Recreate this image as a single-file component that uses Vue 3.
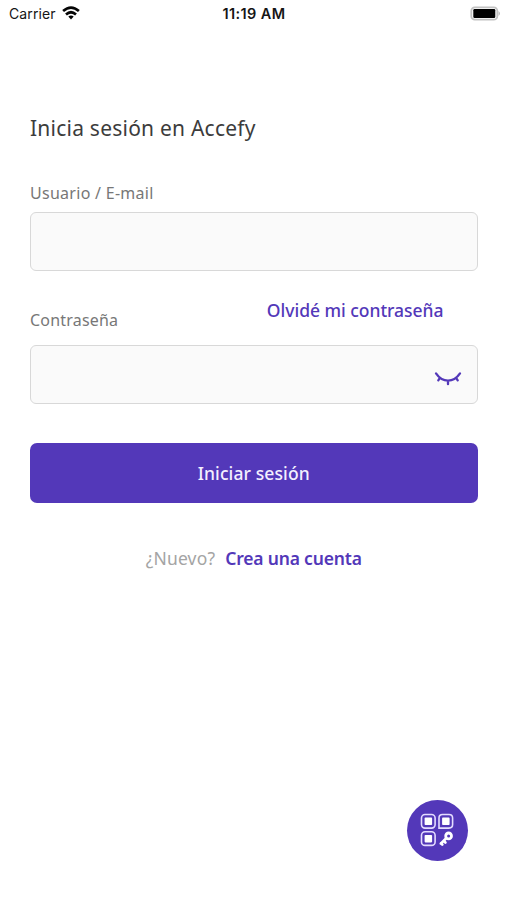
<script setup>
import { ref } from 'vue'

const user = ref('')
const password = ref('')
const hidden = ref(true)
</script>

<template>
  <main class="screen">
    <header class="status">
      <div class="carrier">
        <span>Carrier</span>
        <svg class="wifi" viewBox="0 0 18 14" width="18" height="14" aria-hidden="true">
          <g fill="none" stroke="#050505" stroke-width="2.7">
            <path d="M1.1 5.1Q9-1.8 16.9 5.1" />
            <path d="M4 8.4Q9 4.1 14 8.4" />
          </g>
          <path d="M6.3 10.5Q9 8.3 11.7 10.5L9 13.4Z" fill="#050505" />
        </svg>
      </div>
      <time class="clock">11:19 AM</time>
      <svg class="battery" viewBox="0 0 31 15" width="31" height="15" aria-hidden="true">
        <rect x="1.3" y="1.3" width="26" height="12.4" rx="3.5" fill="#fff" stroke="#c2c2c2" stroke-width="1.8" />
        <rect x="3.3" y="3" width="22" height="9" rx="1.2" fill="#000" />
        <path d="M28.6 5Q31 7.5 28.6 10Z" fill="#aaa" />
      </svg>
    </header>

    <form class="login" @submit.prevent>
      <h1 class="title">Inicia sesión en Accefy</h1>

      <label class="label user-label" for="user">Usuario / E-mail</label>
      <div class="field"><input id="user" v-model="user" type="text" /></div>

      <div class="password-head">
        <label class="label password-label" for="password">Contraseña</label>
        <a class="forgot">Olvidé mi contraseña</a>
      </div>
      <div class="field">
        <input id="password" v-model="password" :type="hidden ? 'password' : 'text'" />
        <button class="eye" type="button" @click="hidden = !hidden">
          <svg viewBox="0 0 28 16" width="28" height="16" fill="none" stroke="#5338b9" stroke-width="2.3" stroke-linecap="round">
            <path d="M2 2.4Q7 9.7 14 9.7T26 2.4M5.9 6.9L4.3 9.3M14 9.9V13.2M22.1 6.9L23.7 9.3" />
          </svg>
        </button>
      </div>

      <button class="submit" type="submit"><span>Iniciar sesión</span></button>
      <p class="signup"><span class="new">¿Nuevo?</span><a class="create">Crea una cuenta</a></p>
    </form>

    <button class="qr" type="button">
      <svg viewBox="0 0 34 34" width="34" height="34" fill="none" aria-hidden="true">
        <g stroke="#e4dcff" stroke-width="1.6">
          <rect x="1.5" y="1.5" width="13.6" height="13.6" rx="3.5" />
          <path d="M22.5 1.5H29Q32.6 1.5 32.6 5V11.6Q32.6 15.1 29 15.1H19V5Q19 1.5 22.5 1.5Z" />
          <rect x="1.5" y="18.8" width="13.6" height="13.6" rx="3.5" />
        </g>
        <g fill="#fff">
          <rect x="4.6" y="4.6" width="7.5" height="7.5" rx=".8" />
          <rect x="22.1" y="4.6" width="7.5" height="7.5" rx=".8" />
          <rect x="4.6" y="21.9" width="7.5" height="7.5" rx=".8" />
        </g>
        <circle cx="28.6" cy="22.9" r="2.9" stroke="#fff" stroke-width="2.8" />
        <path d="M26.2 25.2L20.8 30.6M23.7 27.8L25.4 29.5M21 30.2L22.3 31.5" stroke="#fff" stroke-width="2.7" stroke-linecap="round" />
      </svg>
    </button>
  </main>
</template>

<style>
body { margin: 0; background: #fff; }
</style>

<style scoped>
.screen {
  box-sizing: border-box;
  display: flex;
  flex-direction: column;
  width: 507px;
  height: 900px;
  overflow: hidden;
  background: #fff;
  font-family: "Noto Sans", sans-serif;
}
.status {
  display: grid;
  grid-template-columns: 1fr auto 1fr;
  align-items: center;
  height: 27px;
  padding: 0 6px 0 9px;
  font-family: Inter, sans-serif;
  font-size: 14px;
  color: #151515;
}
.carrier { display: flex; align-items: center; gap: 6px; }
.carrier span { letter-spacing: .1px; }
.wifi { margin-top: -2px; }
.clock { margin-right: 2px; font-size: 14.5px; font-weight: 600; letter-spacing: .38px; }
.battery { justify-self: end; }
.login {
  display: flex;
  flex-direction: column;
  padding: 0 29.5px 0 30px;
}
.title {
  margin: 86px 0 0;
  height: 30px;
  font-size: 21px;
  line-height: 30px;
  font-weight: 400;
  letter-spacing: .23px;
  color: #3c3c3c;
  white-space: nowrap;
}
.label { font-size: 16px; line-height: 24px; letter-spacing: .28px; color: #777; white-space: nowrap; }
.user-label { margin: 38px 0 7px; }
.field {
  box-sizing: border-box;
  display: flex;
  align-items: center;
  height: 59px;
  border: 1px solid #d8d8d8;
  border-radius: 6px;
  background: #fafafa;
}
.field input {
  flex: 1;
  min-width: 0;
  height: 100%;
  box-sizing: border-box;
  padding: 0 16px;
  border: 0;
  outline: 0;
  background: transparent;
  font: inherit;
}
button { padding: 0; border: 0; font: inherit; }
.eye { display: flex; margin: 8px 15px 0 0; background: transparent; }
.password-head {
  display: flex;
  justify-content: space-between;
  align-items: flex-start;
  height: 74px;
  padding-right: 34px;
}
.password-label { margin-top: 37px; letter-spacing: .2px; }
.forgot, .create { color: #5338b9; font-weight: 500; white-space: nowrap; }
.forgot { margin-top: 26px; font-size: 17.5px; line-height: 26px; letter-spacing: -.03px; }
.submit {
  display: flex;
  align-items: center;
  justify-content: center;
  height: 60px;
  margin-top: 39px;
  border-radius: 7px;
  background: #5338b9;
  color: #f4f0ff;
  font-size: 17.5px;
  font-weight: 500;
  letter-spacing: .1px;
}
.signup {
  display: flex;
  justify-content: center;
  gap: 10px;
  margin: 41px 0 0;
  font-size: 17.5px;
  line-height: 28px;
}
.new { color: #a4a4a4; letter-spacing: .15px; }
.create { font-weight: 600; letter-spacing: -.18px; }
.qr {
  box-sizing: border-box;
  display: flex;
  align-items: center;
  justify-content: center;
  align-self: flex-end;
  width: 61px;
  height: 61px;
  margin: auto 39px 39px 0;
  padding: 0 1px 1px 0;
  border-radius: 50%;
  background: #5338b9;
}
</style>
